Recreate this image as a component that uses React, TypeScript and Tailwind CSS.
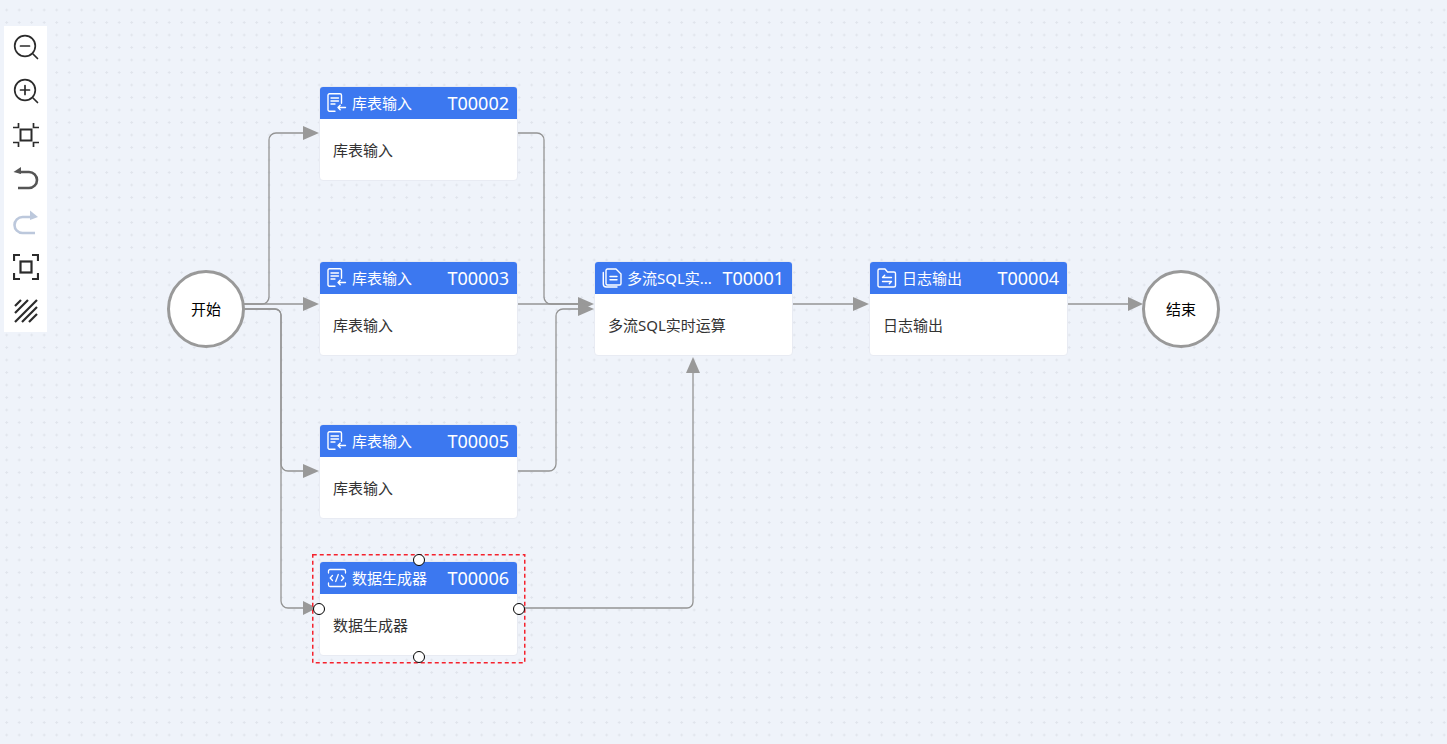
import React from 'react';

const FONT = "font-['Noto_Sans','Noto_Sans_CJK_SC',sans-serif]";

function DocInIcon() {
  return (
    <svg width="20" height="20" viewBox="0 0 20 20" fill="none" stroke="white" strokeWidth="1.4" strokeLinecap="round" strokeLinejoin="round" className="shrink-0">
      <path d="M8 18.300H2.500A1.500 1.500 0 0 1 1 16.800V2.200A1.500 1.500 0 0 1 2.500.700h10.500A1.500 1.500 0 0 1 14.500 2.200v8" />
      <path d="M4 5h7.500M4 8h7.500M4 11h4" />
      <path d="M18.500 14.500H11M13.200 12.300 11 14.500l2.200 2.200" />
    </svg>
  );
}

function CopyDocIcon() {
  return (
    <svg width="20" height="20" viewBox="0 0 20 20" fill="none" stroke="white" strokeWidth="1.4" strokeLinecap="round" strokeLinejoin="round" className="shrink-0">
      <path d="M5.500 1h8.500l5 5v9.500a1.500 1.500 0 0 1-1.500 1.500H5.500A1.500 1.500 0 0 1 4 15.500v-13A1.500 1.500 0 0 1 5.500 1Z" />
      <path d="M1.300 4.500V16a3 3 0 0 0 3 3H15" />
      <path d="M8 8.500h7M8 11.800h7" />
    </svg>
  );
}

function FolderSwapIcon() {
  return (
    <svg width="20" height="20" viewBox="0 0 20 20" fill="none" stroke="white" strokeWidth="1.4" strokeLinecap="round" strokeLinejoin="round" className="shrink-0">
      <path d="M2.500 1h5.500l2.500 3h6.500a1.500 1.500 0 0 1 1.500 1.500v12a1.500 1.500 0 0 1-1.500 1.500h-14.500A1.500 1.500 0 0 1 1 17.500v-15A1.500 1.500 0 0 1 2.500 1Z" />
      <path d="M5.500 9.500h9M5.500 9.500l2.200-2.200M14.500 13.500h-9M14.500 13.500l-2.200 2.200" />
    </svg>
  );
}

function CodeIcon() {
  return (
    <svg width="20" height="20" viewBox="0 0 20 20" fill="none" stroke="white" strokeWidth="1.3" strokeLinecap="round" strokeLinejoin="round" className="shrink-0">
      <path d="M1.500 5V3A1.500 1.500 0 0 1 3 1.500h14A1.500 1.500 0 0 1 18.500 3v2M1.500 15v2A1.500 1.500 0 0 0 3 18.500h14a1.500 1.500 0 0 0 1.500-1.500v-2" />
      <path d="M5.500 7.500 3.200 10l2.300 2.500M14.500 7.500l2.300 2.500-2.300 2.500M11.300 6.500 8.700 13.500" />
    </svg>
  );
}

function FlowNode({ className, icon, title, id, body }: { className: string; icon: React.ReactNode; title: string; id: string; body: string }) {
  return (
    <div className={`absolute w-[199px] h-[95px] bg-white rounded border border-[#e8ebf3] overflow-hidden ${className}`}>
      <div className="flex items-center h-[33px] -mx-px -mt-px bg-[#3c78f0] text-white pl-[8px] pr-[9px]">
        {icon}
        <span className="ml-[5px] pt-px text-[15px] whitespace-nowrap">{title}</span>
        <span className="ml-auto pt-px text-[18px] whitespace-nowrap">{id}</span>
      </div>
      <div className="pl-[13px] pt-[20px] text-[15px] leading-[22px] text-[#333333]">{body}</div>
    </div>
  );
}

function CircleNode({ className, label }: { className: string; label: string }) {
  return (
    <div className={`absolute flex items-center justify-center w-[78px] h-[78px] rounded-full bg-white border-[3px] border-[#999999] text-[15px] text-black ${className}`}>
      {label}
    </div>
  );
}

function Handle({ className }: { className: string }) {
  return <div className={`absolute w-[12px] h-[12px] rounded-full bg-white border-[1.5px] border-black ${className}`} />;
}

function Edges() {
  return (
    <svg className="absolute inset-0" width="1447" height="744" fill="none" stroke="#949494" strokeWidth="1.3">
      <path d="M244 304H262a7 7 0 0 0 7-7V140a7 7 0 0 1 7-7H305" />
      <path d="M244 304H305" />
      <path d="M244 309H275a6 6 0 0 1 6 6V464a7 7 0 0 0 7 7H305" />
      <path d="M244 309H275a6 6 0 0 1 6 6V601a7 7 0 0 0 7 7H305" />
      <path d="M518 133H537a7 7 0 0 1 7 7V297a7 7 0 0 0 7 7H580" />
      <path d="M518 304H580" />
      <path d="M518 471H549a7 7 0 0 0 7-7V316a7 7 0 0 1 7-7H580" />
      <path d="M518 608H687a6 6 0 0 0 6-6V370" />
      <path d="M793 304H855" />
      <path d="M1068 304H1130" />
      <g fill="#999999" stroke="none">
        <polygon points="303,126 319,133 303,140" />
        <polygon points="303,297 319,304 303,311" />
        <polygon points="303,464 319,471 303,478" />
        <polygon points="303,601 317,608 303,615" />
        <polygon points="578,297 594,304 578,311" />
        <polygon points="578,302 594,309 578,316" />
        <polygon points="686,373 693,357 700,373" />
        <polygon points="853,297 869,304 853,311" />
        <polygon points="1128,297 1143,304 1128,311" />
      </g>
    </svg>
  );
}

function ToolIcon({ children, stroke = '#2b2b2b' }: { children: React.ReactNode; stroke?: string }) {
  return (
    <svg width="26" height="26" viewBox="0 0 26 26" fill="none" stroke={stroke} strokeWidth="1.7" strokeLinecap="round" strokeLinejoin="round">
      {children}
    </svg>
  );
}

function Toolbar() {
  return (
    <div className="absolute left-[4px] top-[26px] w-[43px] h-[306px] bg-white flex flex-col items-center pt-[8px] gap-[18px]">
      <ToolIcon>
        <circle cx="12" cy="12" r="10.300" />
        <path d="M7.500 12h9M20 20l4.500 4.500" />
      </ToolIcon>
      <ToolIcon>
        <circle cx="12" cy="12" r="10.300" />
        <path d="M7.500 12h9M12 7.500v9M20 20l4.500 4.500" />
      </ToolIcon>
      <ToolIcon>
        <rect x="7.500" y="7.500" width="11" height="11" strokeWidth="2" strokeLinecap="butt" strokeLinejoin="miter" />
        <path d="M5.500 1v4.500H0M20.500 1v4.500H26M5.500 25v-4.500H0M20.500 25v-4.500H26" strokeLinecap="butt" strokeLinejoin="miter" />
      </ToolIcon>
      <ToolIcon stroke="#555555">
        <path d="M6 6h10a8 8 0 0 1 0 16H5" strokeWidth="2.600" strokeLinecap="butt" />
        <polygon points="0.500,6 8,1 8,8" fill="#555555" stroke="none" />
      </ToolIcon>
      <ToolIcon stroke="#bcc8dc">
        <path d="M20 7H9.500a8 8 0 0 0 0 16H22" strokeWidth="2.600" strokeLinecap="butt" />
        <polygon points="25,7 17,0.500 17,10" fill="#bcc8dc" stroke="none" />
      </ToolIcon>
      <ToolIcon>
        <rect x="7.500" y="7.500" width="11" height="11" strokeWidth="2.200" strokeLinecap="butt" strokeLinejoin="miter" />
        <path d="M1 7V1h6M19 1h6v6M25 19v6h-6M7 25H1v-6" strokeWidth="2.200" strokeLinecap="butt" strokeLinejoin="miter" />
      </ToolIcon>
      <ToolIcon>
        <path d="M2 8 8 2M2 15 15 2M2 24 24 2M9 24 24 9M16 24l8-8" strokeWidth="2.200" strokeLinecap="butt" />
      </ToolIcon>
    </div>
  );
}

export default function App() {
  return (
    <div className={`relative w-[1447px] h-[744px] overflow-hidden bg-[#eff3fa] ${FONT}`}>
      <div className="absolute inset-0 bg-[radial-gradient(circle,#e0e4ec_1px,transparent_1.300px)] bg-[length:12.500px_12.500px] bg-[position:0.450px_3.750px]" />
      <Edges />
      <Toolbar />

      <CircleNode className="left-[167px] top-[270px]" label="开始" />
      <CircleNode className="left-[1142px] top-[270px]" label="结束" />

      <FlowNode className="left-[319px] top-[86px]" icon={<DocInIcon />} title="库表输入" id="T00002" body="库表输入" />
      <FlowNode className="left-[319px] top-[261px]" icon={<DocInIcon />} title="库表输入" id="T00003" body="库表输入" />
      <FlowNode className="left-[319px] top-[424px]" icon={<DocInIcon />} title="库表输入" id="T00005" body="库表输入" />
      <FlowNode className="left-[319px] top-[561px]" icon={<CodeIcon />} title="数据生成器" id="T00006" body="数据生成器" />
      <FlowNode className="left-[594px] top-[261px]" icon={<CopyDocIcon />} title="多流SQL实..." id="T00001" body="多流SQL实时运算" />
      <FlowNode className="left-[869px] top-[261px]" icon={<FolderSwapIcon />} title="日志输出" id="T00004" body="日志输出" />

      {/* selection around T00006 */}
      <svg className="absolute left-[312px] top-[554px]" width="214" height="110" fill="none">
        <rect x="0.750" y="0.750" width="212" height="108" stroke="#f5222d" strokeWidth="1.500" strokeDasharray="4 3" />
      </svg>
      <Handle className="left-[413px] top-[554px]" />
      <Handle className="left-[313px] top-[603px]" />
      <Handle className="left-[513px] top-[603px]" />
      <Handle className="left-[413px] top-[651px]" />
    </div>
  );
}
